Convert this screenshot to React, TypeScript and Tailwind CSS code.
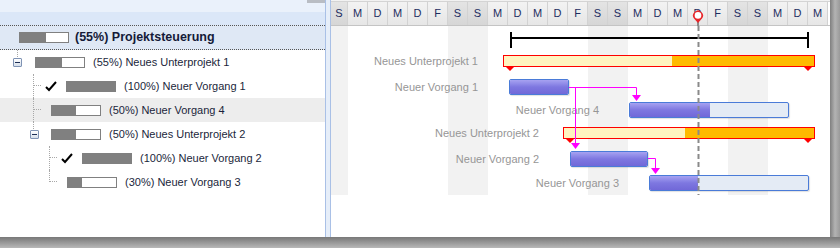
import React from "react";

// Left tree rows
type TreeRow = {
  pad: string;
  lead?: "box" | "check";
  leadGap: string;
  pct: number;
  label: string;
  shade?: boolean;
  lines: React.ReactNode;
};

const Dot = ({ className }: { className: string }) => (
  <div className={`absolute border-[#a8a8a8] border-dotted ${className}`} />
);

const Expander = () => (
  <div className="w-[9px] h-[9px] border border-[#7f93b4] bg-gradient-to-b from-white to-[#d5deea] flex items-center justify-center rounded-[1px]">
    <div className="w-[5px] h-[1px] bg-[#1d2f55]" />
  </div>
);

const Check = () => (
  <svg width="12" height="11" viewBox="0 0 12 11">
    <path d="M1 6 L4 9 L11 1" fill="none" stroke="#000" strokeWidth="2" />
  </svg>
);

const MiniBar = ({ pct }: { pct: number }) => (
  <div className="w-[50px] h-[11px] border border-[#808080] bg-white flex">
    <div className="h-full bg-[#808080]" style={{ width: `${pct}%` }} />
  </div>
);

const rows: TreeRow[] = [
  {
    pad: "pl-[13px]",
    lead: "box",
    leadGap: "ml-[13px]",
    pct: 55,
    label: "(55%) Neues Unterprojekt 1",
    lines: <Dot className="left-[17px] top-0 h-[7px] border-l" />,
  },
  {
    pad: "pl-[45px]",
    lead: "check",
    leadGap: "ml-[9px]",
    pct: 100,
    label: "(100%) Neuer Vorgang 1",
    lines: (
      <>
        <Dot className="left-[33px] top-0 h-[24px] border-l" />
        <Dot className="left-[34px] top-[11px] w-[7px] border-t" />
      </>
    ),
  },
  {
    pad: "pl-[51px]",
    leadGap: "",
    pct: 50,
    label: "(50%) Neuer Vorgang 4",
    shade: true,
    lines: (
      <>
        <Dot className="left-[33px] top-0 h-[24px] border-l" />
        <Dot className="left-[34px] top-[11px] w-[7px] border-t" />
      </>
    ),
  },
  {
    pad: "pl-[30px]",
    lead: "box",
    leadGap: "ml-[12px]",
    pct: 50,
    label: "(50%) Neues Unterprojekt 2",
    lines: <Dot className="left-[33px] top-0 h-[7px] border-l" />,
  },
  {
    pad: "pl-[61px]",
    lead: "check",
    leadGap: "ml-[9px]",
    pct: 100,
    label: "(100%) Neuer Vorgang 2",
    lines: (
      <>
        <Dot className="left-[49px] top-0 h-[24px] border-l" />
        <Dot className="left-[50px] top-[11px] w-[7px] border-t" />
      </>
    ),
  },
  {
    pad: "pl-[67px]",
    leadGap: "",
    pct: 30,
    label: "(30%) Neuer Vorgang 3",
    lines: (
      <>
        <Dot className="left-[49px] top-0 h-[12px] border-l" />
        <Dot className="left-[50px] top-[11px] w-[7px] border-t" />
      </>
    ),
  },
];

const days = ["S", "M", "D", "M", "D", "F", "S", "S", "M", "D", "M", "D", "F", "S", "S", "M", "D", "M", "D", "F", "S", "S", "M", "D", "M"];

// Gantt items, x/y local to chart body (origin = right panel, below header)
type Task = { label: string; labelEnd: number; x: number; y: number; w: number; done: number; kind: "task" | "group" };

const tasks: Task[] = [
  { label: "Neues Unterprojekt 1", labelEnd: 147, x: 172, y: 29, w: 312, done: 168, kind: "group" },
  { label: "Neuer Vorgang 1", labelEnd: 147, x: 178, y: 53, w: 60, done: 60, kind: "task" },
  { label: "Neuer Vorgang 4", labelEnd: 268, x: 298, y: 76, w: 160, done: 80, kind: "task" },
  { label: "Neues Unterprojekt 2", labelEnd: 208, x: 232, y: 101, w: 252, done: 121, kind: "group" },
  { label: "Neuer Vorgang 2", labelEnd: 208, x: 239, y: 125, w: 78, done: 78, kind: "task" },
  { label: "Neuer Vorgang 3", labelEnd: 288, x: 318, y: 149, w: 160, done: 48, kind: "task" },
];

const GanttBar = ({ t }: { t: Task }) => {
  if (t.kind === "group") {
    return (
      <div
        className="absolute h-[12px] border border-[#ff0000] bg-[#ffba00] flex"
        style={{ left: t.x, top: t.y, width: t.w }}
      >
        <div className="h-full bg-[#fff4c0]" style={{ width: t.done }} />
      </div>
    );
  }
  return (
    <div
      className="absolute h-[16px] border border-[#4a7bd8] rounded-[2px] bg-[#e4ebf5] flex overflow-hidden shadow-[1px_1px_1px_rgba(0,0,0,0.12)]"
      style={{ left: t.x, top: t.y, width: t.w }}
    >
      <div className="h-full bg-gradient-to-b from-[#a7a2f1] via-[#7e77e0] to-[#7168d8]" style={{ width: t.done }} />
    </div>
  );
};

const ChartLines = () => (
  <svg className="absolute left-0 top-0" width="499" height="169">
    {/* summary bracket */}
    <rect x="179" y="11" width="298" height="2" fill="#000" />
    <rect x="179" y="6" width="2" height="16" fill="#000" />
    <rect x="476" y="6" width="2" height="16" fill="#000" />
    {/* group triangles */}
    <path d="M174 40 L184 40 L179 45 Z" fill="#ff0000" />
    <path d="M472 40 L482 40 L477 45 Z" fill="#ff0000" />
    <path d="M234 112 L244 112 L239 117 Z" fill="#ff0000" />
    <path d="M472 112 L482 112 L477 117 Z" fill="#ff0000" />
    {/* dependency links */}
    <g stroke="#ff00ff" strokeWidth="1" fill="none">
      <path d="M238 61.5 H305.5 V70" />
      <path d="M244.5 61.5 V118" />
      <path d="M317 132.5 H324.5 V142" />
    </g>
    <g fill="#ff00ff">
      <path d="M301 69 L310 69 L305.5 75 Z" />
      <path d="M240 117 L249 117 L244.5 123 Z" />
      <path d="M320 142 L329 142 L324.5 148 Z" />
    </g>
    {/* today */}
    <line x1="367.5" y1="0" x2="367.5" y2="169" stroke="#8a8a8a" strokeWidth="2" strokeDasharray="5 3" />
  </svg>
);

const App: React.FC = () => {
  return (
    <div className="w-[840px] h-[248px] flex flex-col font-['Liberation_Sans',Arial,sans-serif] text-[11px] overflow-hidden">
      <div className="flex h-[237px]">
        <div className="w-[830px] flex bg-white">
          {/* Tree panel */}
          <div className="w-[325px] flex flex-col">
            <div className="h-[12px] bg-[#eaf1fb] flex justify-end">
              <div className="w-[18px] h-[3px] bg-[#b9bdc4]" />
            </div>
            <div className="h-[13px] bg-[#dbe7f8]" />
            <div className="h-[25px] bg-[#dfe8f5] border-y border-dotted border-[#555] flex items-center pl-[19px]">
              <MiniBar pct={55} />
              <span className="ml-[6px] text-[12.5px] font-bold text-[#141a38]">(55%) Projektsteuerung</span>
            </div>
            {rows.map((r) => (
              <div key={r.label} className={`relative h-[24px] flex items-center ${r.pad} ${r.shade ? "bg-[#ededed]" : ""}`}>
                {r.lines}
                {r.lead === "box" && <Expander />}
                {r.lead === "check" && <Check />}
                <div className={r.leadGap}>
                  <MiniBar pct={r.pct} />
                </div>
                <span className="ml-[8px] text-[#1b1f3b]">{r.label}</span>
              </div>
            ))}
          </div>

          {/* Splitter */}
          <div className="w-[6px] border-x border-[#a9c0e6] bg-[#e6eef9]" />

          {/* Chart panel */}
          <div className="w-[499px] flex flex-col">
            <div className="relative">
              <div className="h-[2px] bg-[#f2f2f2] border-b border-[#d4d4d4]" />
              <div className="flex h-[24px] border-b border-[#c4c4c4]">
                {days.map((d, i) => (
                  <div
                    key={i}
                    className={`${i === 0 ? "w-[17px]" : "w-[20px]"} shrink-0 border-r border-[#d2d2d2] flex items-center justify-center text-[#1c2c60] ${
                      d === "S" ? "bg-gradient-to-b from-[#e4e4e4] to-[#d6d6d6]" : "bg-gradient-to-b from-[#f3f3f3] to-[#e6e6e6]"
                    }`}
                  >
                    {d}
                  </div>
                ))}
              </div>
              <svg className="absolute left-[360px] top-[9px]" width="14" height="17" viewBox="0 0 14 17">
                <line x1="7" y1="13" x2="7" y2="17" stroke="#8a8a8a" strokeWidth="2" />
                <path d="M7 14 L3 9.6 A5 5 0 1 1 11 9.6 Z" fill="#e8262a" />
                <circle cx="7" cy="6.4" r="3.3" fill="#fff" />
              </svg>
            </div>
            <div className="relative h-[169px] flex">
              {days.map((d, i) => (
                <div
                  key={i}
                  className={`${i === 0 ? "w-[17px]" : "w-[20px]"} shrink-0 h-full ${d === "S" ? "bg-[#f2f2f2]" : "bg-white"}`}
                />
              ))}
              {tasks.map((t) => (
                <div
                  key={t.label}
                  className="absolute left-0 h-[16px] flex items-center justify-end text-[#969696] whitespace-nowrap"
                  style={{ width: t.labelEnd, top: t.y + (t.kind === "group" ? -2 : 0) }}
                >
                  {t.label}
                </div>
              ))}
              {tasks.map((t) => (
                <GanttBar key={t.label + "-bar"} t={t} />
              ))}
              <ChartLines />
            </div>
          </div>
        </div>
        <div className="w-[10px] bg-gradient-to-r from-[#7f7f7f] via-[#b3b3b3] to-[#9a9a9a]" />
      </div>
      <div className="h-[11px] bg-gradient-to-b from-[#787878] to-[#b8b8b8]" />
    </div>
  );
};

export default App;
